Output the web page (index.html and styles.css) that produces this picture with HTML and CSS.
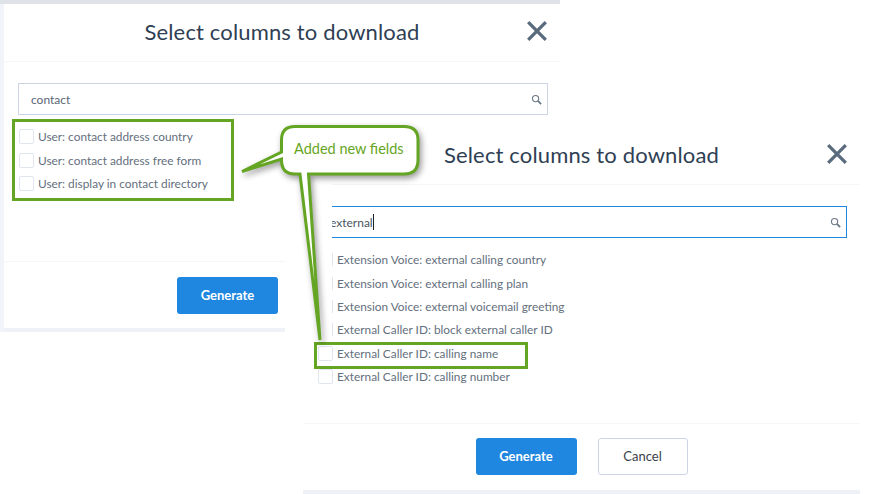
FILE: index.html
```html
<!DOCTYPE html>
<html lang="en">
<head>
    <meta charset="UTF-8">
    <meta name="viewport" content="width=device-width, initial-scale=1.0">
    <title>Select columns to download</title>
    <link rel="stylesheet" href="styles.css">
</head>
<body>
    <div class="canvas">
        <div class="shot shot-back">
            <div class="dialog-head">
                <h2 class="dialog-title">Select columns to download</h2>
                <svg class="close-icon" viewBox="0 0 20 20"><path d="M2 2L18 18M18 2L2 18"/></svg>
            </div>
            <div class="dialog-body">
                <div class="search-box">
                    <span>contact</span>
                    <svg class="search-icon" viewBox="0 0 12 12"><circle cx="5" cy="5" r="3.4"/><path class="search-handle" d="M7.6 7.6L11 11"/></svg>
                </div>
                <ul class="column-list">
                    <li class="column-row"><span class="check"></span>User: contact address country</li>
                    <li class="column-row"><span class="check"></span>User: contact address free form</li>
                    <li class="column-row"><span class="check"></span>User: display in contact directory</li>
                </ul>
            </div>
            <div class="dialog-foot">
                <button class="btn btn-primary">Generate</button>
            </div>
        </div>

        <div class="shot shot-front">
            <div class="dialog-head">
                <h2 class="dialog-title">Select columns to download</h2>
                <svg class="close-icon" viewBox="0 0 20 20"><path d="M2 2L18 18M18 2L2 18"/></svg>
            </div>
            <div class="dialog-body">
                <div class="search-box search-focus">
                    <span>external</span><span class="caret"></span>
                    <svg class="search-icon" viewBox="0 0 12 12"><circle cx="5" cy="5" r="3.4"/><path class="search-handle" d="M7.6 7.6L11 11"/></svg>
                </div>
                <ul class="column-list">
                    <li class="column-row"><span class="check"></span>Extension Voice: external calling country</li>
                    <li class="column-row"><span class="check"></span>Extension Voice: external calling plan</li>
                    <li class="column-row"><span class="check"></span>Extension Voice: external voicemail greeting</li>
                    <li class="column-row"><span class="check"></span>External Caller ID: block external caller ID</li>
                    <li class="column-row"><span class="check"></span>External Caller ID: calling name</li>
                    <li class="column-row"><span class="check"></span>External Caller ID: calling number</li>
                </ul>
            </div>
            <div class="dialog-foot">
                <button class="btn btn-primary">Generate</button>
                <button class="btn btn-ghost">Cancel</button>
            </div>
        </div>

        <!-- white patch the annotator left over the front dialog's left edge -->
        <div class="patch"></div>

        <!-- annotation on top of both screenshots -->
        <div class="mark mark-list"></div>
        <div class="mark mark-row"></div>
        <svg class="callout-shape" viewBox="0 0 879 494">
            <path d="M295 126.5H404Q418 126.5 418 140V160Q418 174 404 174H308.5L320 340L300 174H295Q281.5 174 281.5 160V159L242 171.5L281.5 152V140Q281.5 126.5 295 126.5Z"/>
        </svg>
        <div class="callout-text">Added new fields</div>
    </div>
</body>
</html>
```

FILE: styles.css
```css
* {
    box-sizing: border-box;
}

body {
    margin: 0;
    background-color: #fff;
    font-family: Lato, "Noto Sans", sans-serif;
    color: #2f3f53;
}

.canvas {
    position: relative;
    width: 879px;
    height: 494px;
    overflow: hidden;
}

.shot {
    position: absolute;
    display: flex;
    flex-direction: column;
    background-color: #fff;
}

.shot-back {
    left: 0;
    top: 0;
    width: 560px;
    height: 332px;
    padding-left: 4px;
    border-top: 4px solid #dfe3e8;
    box-shadow: inset 4px 0 0 #f1f4f9;
}

.shot-front {
    left: 285px;
    top: 127px;
    width: 575px;
    height: 367px;
    padding-left: 18px;
}

.dialog-head {
    position: relative;
    display: flex;
    justify-content: center;
    align-items: center;
    height: 58px;
    padding-bottom: 2px;
    border-bottom: 1px solid #f5f6f9;
}

.dialog-title {
    margin: 0;
    font-size: 22px;
    font-weight: 400;
    letter-spacing: 0.15px;
    color: #2f4054;
}

.close-icon {
    position: absolute;
    right: 12px;
    top: 16px;
    width: 22px;
    height: 22px;
    fill: none;
    stroke: #5a6b7d;
    stroke-width: 3;
}

.dialog-body {
    flex: 1;
    padding: 21px 12px 0 14px;
}

.shot-front .dialog-body {
    padding-right: 13px;
}

.search-box {
    display: flex;
    align-items: center;
    height: 32px;
    padding: 0 5px 0 12px;
    border: 1px solid #ccd5e6;
    font-size: 12px;
    color: #5a6674;
}

.search-focus {
    border-color: #2087e0;
    color: #4a5562;
}

.caret {
    width: 1px;
    height: 16px;
    background-color: #222;
}

.search-icon {
    width: 11px;
    height: 11px;
    margin-left: auto;
    fill: none;
    stroke: #6c7a88;
    stroke-width: 1.2;
}

.search-handle {
    stroke-width: 2;
}

.column-list {
    list-style: none;
    margin: 0;
    padding: 10px 0 0 1px;
}

.column-row {
    display: flex;
    align-items: center;
    height: 23.4px;
    font-size: 11.85px;
    color: #646f7d;
}

.check {
    width: 15px;
    height: 15px;
    margin-right: 4px;
    border: 1px solid #e0e5f0;
    border-radius: 2px;
    background-color: #fff;
}

.dialog-foot {
    display: flex;
    justify-content: center;
    gap: 21px;
    align-items: center;
    height: 71px;
    border-top: 1px solid #f5f6f9;
    border-bottom: 4px solid #eef1f6;
}

/* the back dialog's Cancel sits under the front dialog, keep its room */
.shot-back .dialog-foot {
    padding-right: 109px;
}

.shot-front .dialog-foot {
    padding-bottom: 2px;
}

.btn {
    width: 101px;
    height: 37px;
    border-radius: 3px;
    font-family: inherit;
    font-size: 13px;
}

.btn-primary {
    background-color: #2087e0;
    border: none;
    color: #fff;
    font-weight: 700;
}

.btn-ghost {
    width: 90px;
    background-color: #fff;
    border: 1px solid #ccd5e6;
    color: #3a3f47;
}

.patch {
    position: absolute;
    left: 303px;
    top: 178px;
    width: 29px;
    height: 164px;
    background-color: #fff;
}

.mark {
    position: absolute;
    border: 3px solid #64a523;
}

.mark-list {
    left: 12px;
    top: 119px;
    width: 222px;
    height: 82px;
}

.mark-row {
    left: 314px;
    top: 342px;
    width: 214px;
    height: 27px;
}

.callout-shape {
    position: absolute;
    left: 0;
    top: 0;
    width: 879px;
    height: 494px;
    fill: #fff;
    stroke: #64a523;
    stroke-width: 3;
    filter: drop-shadow(2px 3px 3px rgba(0, 0, 0, 0.4));
}

.callout-text {
    position: absolute;
    left: 294px;
    top: 140px;
    font-size: 14.5px;
    color: #64a523;
}
```
